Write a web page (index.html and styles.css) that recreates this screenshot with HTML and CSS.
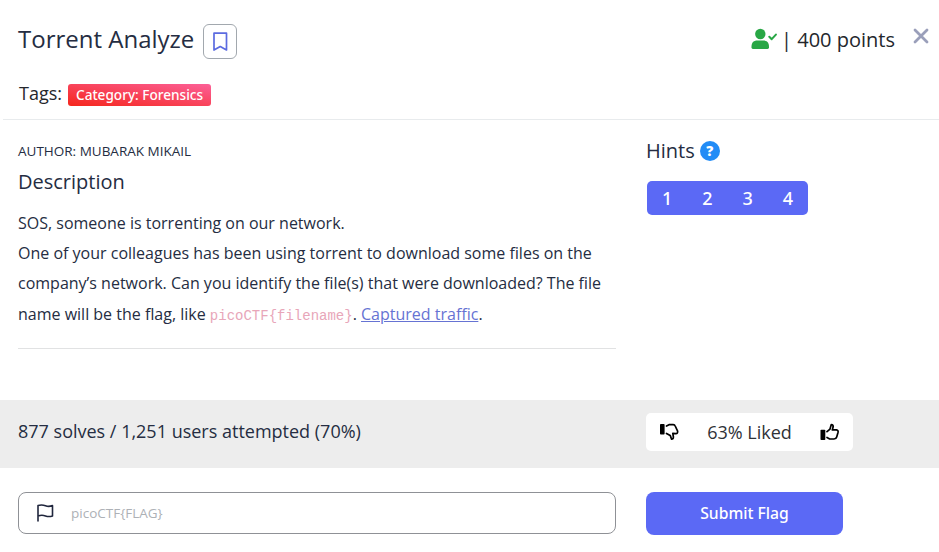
FILE: index.html
```html
<!DOCTYPE html>
<html lang="en">
<head>
<meta charset="utf-8">
<title>Torrent Analyze</title>
<link rel="stylesheet" href="styles.css">
</head>
<body>
<main class="challenge">
  <header class="header">
    <div class="title-row">
      <h1 class="title">Torrent Analyze</h1>
      <button class="bookmark" aria-label="Bookmark">
        <svg width="15" height="20" viewBox="0 0 15 20"><path d="M1 1.200h12.500v16.800l-6.250-3.500L1 18z" fill="none" stroke="#5c6be0" stroke-width="1.700" stroke-linejoin="round"/></svg>
      </button>
      <div class="points">
        <svg class="solver" width="26" height="22" viewBox="0 0 26 22" fill="#28a745"><circle cx="9.300" cy="6" r="5.200"/><path d="M.5 18.500c0-4 2.300-6 5.700-6h6.100c3.400 0 5.700 2 5.700 6v1.100q0 1.400-1.400 1.400H1.900Q.5 21 .5 19.600z"/><path d="M18.300 8.700l2.400 2.500 4.200-4.600" fill="none" stroke="#28a745" stroke-width="2" stroke-linecap="round" stroke-linejoin="round"/></svg>
        <span>| 400 points</span>
      </div>
      <button class="close" aria-label="Close"><svg width="16" height="16" viewBox="0 0 16 16"><path d="M2 2l12 12M14 2L2 14" stroke="#9a9fba" stroke-width="2.800" stroke-linecap="round"/></svg></button>
    </div>
    <div class="tags"><span>Tags:</span><span class="tag">Category: Forensics</span></div>
  </header>
  <div class="body">
    <section class="info">
      <p class="author">AUTHOR: MUBARAK MIKAIL</p>
      <h2 class="subtitle">Description</h2>
      <p class="text">SOS, someone is torrenting on our network.<br>One of your colleagues has been using torrent to download some files on the<br>company’s network. Can you identify the file(s) that were downloaded? The file<br>name will be the flag, like <code>picoCTF{filename}</code>. <a href="#">Captured traffic</a>.</p>
    </section>
    <aside class="hints">
      <div class="hints-head"><span>Hints</span><span class="help">?</span></div>
      <div class="hint-group"><button>1</button><button>2</button><button>3</button><button>4</button></div>
    </aside>
  </div>
  <div class="stats">
    <span class="solves">877 solves / 1,251 users attempted (70%)</span>
    <div class="rating">
      <svg width="19" height="18" viewBox="0 0 19 18"><rect x="0" y="1" width="4.600" height="10.500" rx=".8"/><path d="M6.500 3L9 1.700h4.200q1.500 0 2 1.300l2.400 5.200q.3 2.400-1.700 2.400l-3.100-.2.600 3.600q0 2.200-1.800 2.200l-1.400-3.800-3.700-2" fill="none" stroke="#000" stroke-width="1.700" stroke-linejoin="round" stroke-linecap="round"/></svg>
      <span>63% Liked</span>
      <svg width="19" height="18" viewBox="0 0 19 18"><rect x="0.500" y="6.800" width="4.800" height="10.200" rx=".8"/><path d="M7 8.700l3-2.600 1.300-4.500q2.200.2 1.800 2.500l-.8 2.800h4.200q2 .3 1.500 2.500l-1.300 4.500q-.6 2.100-2.700 2.100H9.700l-2.700-1.500" fill="none" stroke="#000" stroke-width="1.700" stroke-linejoin="round" stroke-linecap="round"/></svg>
    </div>
  </div>
  <form class="submit">
    <label class="field">
      <svg width="18" height="18" viewBox="0 0 18 18"><path d="M1 17V1.500q4-1 7.500.3t7-.3v10.400q-3.500 1.200-7 0t-7.500 0" fill="none" stroke="#20263d" stroke-width="1.600" stroke-linecap="round" stroke-linejoin="round"/></svg>
      <input type="text" placeholder="picoCTF{FLAG}">
    </label>
    <button type="button" class="send">Submit Flag</button>
  </form>
</main>
</body>
</html>
```
FILE: styles.css
```css
* { box-sizing: border-box; }
body { margin: 0; background: #fff; color: #252d42; font-family: "Open Sans", "Noto Sans", sans-serif; font-size: 16px; overflow: hidden; }
h1, h2, p { margin: 0; font-weight: 400; }
button { border: 0; padding: 0; background: none; font: inherit; color: inherit; }
svg { display: block; flex: none; }
.challenge { height: 552px; white-space: nowrap; }
.header { height: 120px; margin-left: 3px; padding: 24px 10px 0 15px; border-bottom: 1px solid #e8ebed; }
.title-row { display: flex; align-items: flex-start; height: 35px; }
.title { width: 176px; font-size: 24px; line-height: 30px; }
.bookmark { display: grid; place-items: center; width: 34px; height: 35px; margin-left: 9px; border: 1px solid #a2a8ae; border-radius: 6px; }
.points { display: flex; margin-left: auto; font-size: 20px; line-height: 32px; color: #24272c; }
.solver { margin: 4px 4px 0 0; }
.close { margin: 4px 0 0 18px; }
.tags { display: flex; align-items: center; gap: 6px; margin: 21px 0 0 1px; height: 26px; font-size: 18px; color: #24272c; }
.tag { height: 22px; margin-top: 4px; padding: 0 8px; border-radius: 3px; background: linear-gradient(to top right, #f5261c, #fc6098); color: #fff; font: 500 13.600px/22px "Noto Sans", sans-serif; }
.body { display: grid; grid-template-columns: 598px 1fr; column-gap: 30px; height: 280px; padding: 19px 0 0 18px; }
.info { height: 210px; border-bottom: 1px solid #e1e2e3; }
.author { font-size: 13.500px; line-height: 24px; }
.subtitle { font-size: 20px; line-height: 38px; }
.text { margin-top: 7px; line-height: 30.220px; }
.text code { font-family: "Liberation Mono", monospace; font-size: 14px; color: #e8a6b9; }
.text a { color: #6673d3; }
.hints-head { display: flex; align-items: center; gap: 5px; height: 24px; font-size: 20px; }
.hints-head > :first-child { line-height: 24px; }
.help { display: grid; place-items: center; width: 20px; height: 20px; border-radius: 50%; background: #228cf6; color: #fff; font-size: 14px; font-weight: 800; line-height: 20px; }
.hint-group { display: grid; grid-template-columns: repeat(4, 1fr); width: 161px; height: 34px; margin: 18px 0 0 1px; border-radius: 5px; background: #5b69f5; color: #fff; font: 500 18px "Noto Sans", sans-serif; }
.stats { display: grid; grid-template-columns: 598px 207px; column-gap: 30px; align-items: center; height: 68px; padding: 0 0 4px 18px; background: #ededed; font-size: 18px; }
.solves { margin-top: -2px; }
.rating { display: flex; align-items: center; justify-content: space-between; height: 38px; padding: 0 14px; border-radius: 5px; background: #fff; color: #303237; }
.submit { display: grid; grid-template-columns: 598px 197px; column-gap: 30px; padding: 24px 0 0 18px; }
.field { display: flex; align-items: center; height: 42px; padding-left: 18px; border: 1px solid #8f9196; border-radius: 8px; }
.field input { flex: 1; margin-left: 16px; padding: 0; border: 0; outline: 0; background: none; font: 13.500px "Open Sans", sans-serif; }
.field input::placeholder { color: #adb1b6; opacity: 1; }
.send { height: 43px; padding-bottom: 2px; border-radius: 8px; background: #5b69f5; color: #fff; font: 500 15.700px "Noto Sans", sans-serif; }
```
